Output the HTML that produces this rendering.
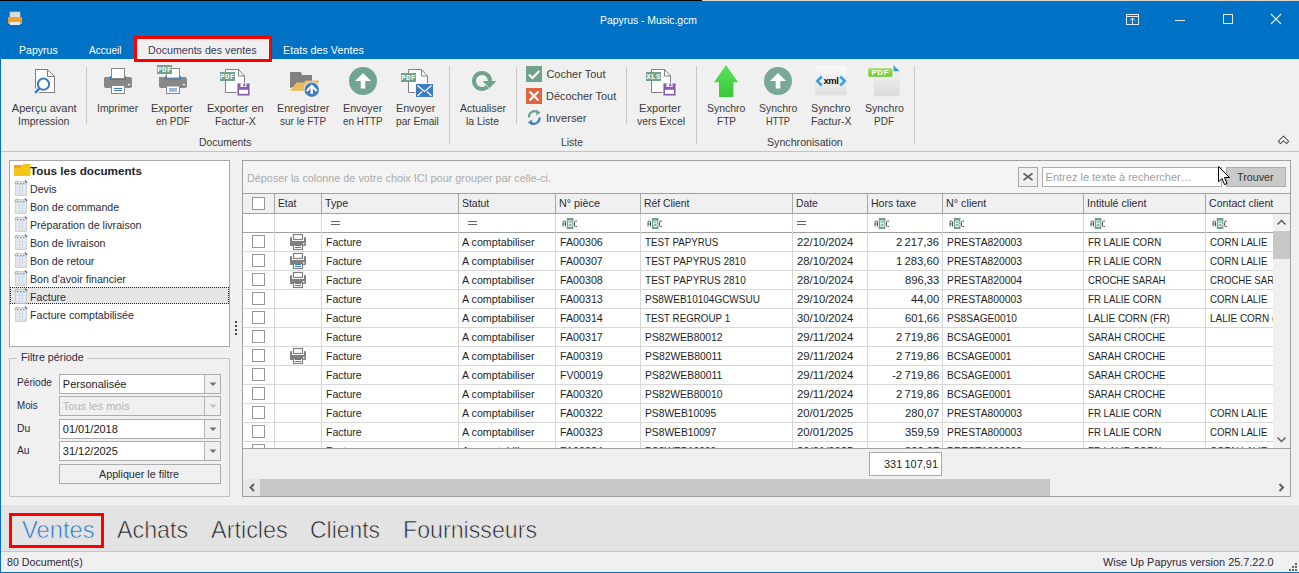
<!DOCTYPE html>
<html><head><meta charset="utf-8"><style>
html,body{margin:0;padding:0;width:1299px;height:573px;overflow:hidden;background:#f0f0f0}
body{position:relative;font-family:"Liberation Sans",sans-serif}
svg{overflow:visible}
</style></head><body>
<div style="position:absolute;left:0px;top:0px;width:1299px;height:573px;background:#f0f0f0"></div>
<div style="position:absolute;left:0px;top:0px;width:1299px;height:59px;background:#0072c6"></div>
<div style="position:absolute;left:0px;top:0px;width:702px;height:1px;background:#000"></div>
<div style="position:absolute;left:702px;top:0px;width:597px;height:1px;background:#d9d5cf"></div>
<div style="position:absolute;left:0px;top:1px;width:1px;height:572px;background:#0072c6"></div>
<div style="position:absolute;left:0px;top:572px;width:1299px;height:1px;background:#0072c6"></div>
<svg style="position:absolute;left:7px;top:11px" width="16" height="16" viewBox="0 0 16 16"><rect x="3" y="1" width="10" height="6" fill="#dcdcdc" stroke="#c8c8c8" stroke-width="0.6"/><rect x="1" y="6" width="14" height="7" rx="1" fill="#f0a030"/><rect x="3" y="11" width="10" height="3" fill="#e8e8e8"/></svg>
<div style="position:absolute;left:600.00px;top:14px;font-size:11px;line-height:normal;white-space:pre;color:#ffffff;transform:scaleX(0.9446);transform-origin:0 0;">Papyrus - Music.gcm</div>
<svg style="position:absolute;left:1125px;top:13px" width="15" height="13" viewBox="0 0 15 13"><rect x="1.5" y="1.5" width="12" height="10" fill="none" stroke="#e8e8e8" stroke-width="1"/><line x1="1.5" y1="3.5" x2="13.5" y2="3.5" stroke="#e8e8e8"/><line x1="7.5" y1="5" x2="7.5" y2="11.5" stroke="#e8e8e8"/><path d="M5 7.5 L7.5 5 L10 7.5" fill="none" stroke="#e8e8e8"/></svg>
<div style="position:absolute;left:1175px;top:20px;width:10px;height:1px;background:#e8e8e8"></div>
<svg style="position:absolute;left:1222px;top:13px" width="12" height="12" viewBox="0 0 12 12"><rect x="1.5" y="1.5" width="9" height="9" fill="none" stroke="#e8e8e8"/></svg>
<svg style="position:absolute;left:1270px;top:13px" width="12" height="12" viewBox="0 0 12 12"><path d="M1 1 L11 11 M11 1 L1 11" stroke="#e8e8e8" stroke-width="1.1"/></svg>
<div style="position:absolute;left:18.60px;top:44px;font-size:11px;line-height:normal;white-space:pre;color:#ffffff;transform:scaleX(0.9590);transform-origin:0 0;">Papyrus</div>
<div style="position:absolute;left:89.00px;top:44px;font-size:11px;line-height:normal;white-space:pre;color:#ffffff;transform:scaleX(0.9165);transform-origin:0 0;">Accueil</div>
<div style="position:absolute;left:137px;top:39px;width:132px;height:20px;background:#f0f0f0"></div>
<div style="position:absolute;left:147.50px;top:44px;font-size:11px;line-height:normal;white-space:pre;color:#3a3a5a;transform:scaleX(0.9697);transform-origin:0 0;">Documents des ventes</div>
<div style="position:absolute;left:282.60px;top:44px;font-size:11px;line-height:normal;white-space:pre;color:#ffffff;transform:scaleX(0.9787);transform-origin:0 0;">Etats des Ventes</div>
<div style="position:absolute;left:1px;top:59px;width:1298px;height:92px;background:#f0f0f0"></div>
<div style="position:absolute;left:1px;top:151px;width:1298px;height:1px;background:#c4c4c4"></div>
<div style="position:absolute;left:11.80px;top:102px;font-size:11px;line-height:normal;white-space:pre;color:#3b3b3b;">Aperçu avant</div>
<div style="position:absolute;left:17.60px;top:115px;font-size:11px;line-height:normal;white-space:pre;color:#3b3b3b;transform:scaleX(0.9554);transform-origin:0 0;">Impression</div>
<div style="position:absolute;left:96.60px;top:102px;font-size:11px;line-height:normal;white-space:pre;color:#3b3b3b;transform:scaleX(0.9472);transform-origin:0 0;">Imprimer</div>
<div style="position:absolute;left:151.30px;top:102px;font-size:11px;line-height:normal;white-space:pre;color:#3b3b3b;transform:scaleX(1.0030);transform-origin:0 0;">Exporter</div>
<div style="position:absolute;left:155.70px;top:115px;font-size:11px;line-height:normal;white-space:pre;color:#3b3b3b;transform:scaleX(0.9063);transform-origin:0 0;">en PDF</div>
<div style="position:absolute;left:206.70px;top:102px;font-size:11px;line-height:normal;white-space:pre;color:#3b3b3b;transform:scaleX(0.9953);transform-origin:0 0;">Exporter en</div>
<div style="position:absolute;left:214.60px;top:115px;font-size:11px;line-height:normal;white-space:pre;color:#3b3b3b;transform:scaleX(0.9674);transform-origin:0 0;">Factur-X</div>
<div style="position:absolute;left:276.60px;top:102px;font-size:11px;line-height:normal;white-space:pre;color:#3b3b3b;transform:scaleX(0.9721);transform-origin:0 0;">Enregistrer</div>
<div style="position:absolute;left:279.70px;top:115px;font-size:11px;line-height:normal;white-space:pre;color:#3b3b3b;transform:scaleX(0.9087);transform-origin:0 0;">sur le FTP</div>
<div style="position:absolute;left:342.60px;top:102px;font-size:11px;line-height:normal;white-space:pre;color:#3b3b3b;transform:scaleX(0.9714);transform-origin:0 0;">Envoyer</div>
<div style="position:absolute;left:342.60px;top:115px;font-size:11px;line-height:normal;white-space:pre;color:#3b3b3b;transform:scaleX(0.9020);transform-origin:0 0;">en HTTP</div>
<div style="position:absolute;left:396.40px;top:102px;font-size:11px;line-height:normal;white-space:pre;color:#3b3b3b;transform:scaleX(0.9739);transform-origin:0 0;">Envoyer</div>
<div style="position:absolute;left:395.60px;top:115px;font-size:11px;line-height:normal;white-space:pre;color:#3b3b3b;transform:scaleX(0.9212);transform-origin:0 0;">par Email</div>
<div style="position:absolute;left:460.00px;top:102px;font-size:11px;line-height:normal;white-space:pre;color:#3b3b3b;transform:scaleX(0.9524);transform-origin:0 0;">Actualiser</div>
<div style="position:absolute;left:466.00px;top:115px;font-size:11px;line-height:normal;white-space:pre;color:#3b3b3b;transform:scaleX(0.9468);transform-origin:0 0;">la Liste</div>
<div style="position:absolute;left:546.40px;top:68px;font-size:11px;line-height:normal;white-space:pre;color:#3b3b3b;">Cocher Tout</div>
<div style="position:absolute;left:546.40px;top:90px;font-size:11px;line-height:normal;white-space:pre;color:#3b3b3b;transform:scaleX(0.9925);transform-origin:0 0;">Décocher Tout</div>
<div style="position:absolute;left:546.40px;top:112px;font-size:11px;line-height:normal;white-space:pre;color:#3b3b3b;transform:scaleX(1.0217);transform-origin:0 0;">Inverser</div>
<div style="position:absolute;left:639.00px;top:102px;font-size:11px;line-height:normal;white-space:pre;color:#3b3b3b;transform:scaleX(1.0102);transform-origin:0 0;">Exporter</div>
<div style="position:absolute;left:637.00px;top:115px;font-size:11px;line-height:normal;white-space:pre;color:#3b3b3b;transform:scaleX(0.9461);transform-origin:0 0;">vers Excel</div>
<div style="position:absolute;left:706.60px;top:102px;font-size:11px;line-height:normal;white-space:pre;color:#3b3b3b;transform:scaleX(0.9516);transform-origin:0 0;">Synchro</div>
<div style="position:absolute;left:717.00px;top:115px;font-size:11px;line-height:normal;white-space:pre;color:#3b3b3b;transform:scaleX(0.9145);transform-origin:0 0;">FTP</div>
<div style="position:absolute;left:758.80px;top:102px;font-size:11px;line-height:normal;white-space:pre;color:#3b3b3b;transform:scaleX(0.9516);transform-origin:0 0;">Synchro</div>
<div style="position:absolute;left:766.00px;top:115px;font-size:11px;line-height:normal;white-space:pre;color:#3b3b3b;transform:scaleX(0.8356);transform-origin:0 0;">HTTP</div>
<div style="position:absolute;left:811.00px;top:102px;font-size:11px;line-height:normal;white-space:pre;color:#3b3b3b;transform:scaleX(0.9763);transform-origin:0 0;">Synchro</div>
<div style="position:absolute;left:810.50px;top:115px;font-size:11px;line-height:normal;white-space:pre;color:#3b3b3b;transform:scaleX(0.9603);transform-origin:0 0;">Factur-X</div>
<div style="position:absolute;left:864.70px;top:102px;font-size:11px;line-height:normal;white-space:pre;color:#3b3b3b;transform:scaleX(0.9615);transform-origin:0 0;">Synchro</div>
<div style="position:absolute;left:874.00px;top:115px;font-size:11px;line-height:normal;white-space:pre;color:#3b3b3b;transform:scaleX(0.9091);transform-origin:0 0;">PDF</div>
<div style="position:absolute;left:198.90px;top:136px;font-size:11px;line-height:normal;white-space:pre;color:#3b3b3b;transform:scaleX(0.9401);transform-origin:0 0;">Documents</div>
<div style="position:absolute;left:561.00px;top:136px;font-size:11px;line-height:normal;white-space:pre;color:#3b3b3b;transform:scaleX(0.9468);transform-origin:0 0;">Liste</div>
<div style="position:absolute;left:766.70px;top:136px;font-size:11px;line-height:normal;white-space:pre;color:#3b3b3b;transform:scaleX(0.9684);transform-origin:0 0;">Synchronisation</div>
<div style="position:absolute;left:86px;top:67px;width:1px;height:57px;background:#c9c9c9"></div>
<div style="position:absolute;left:449px;top:66px;width:1px;height:78px;background:#c9c9c9"></div>
<div style="position:absolute;left:516px;top:67px;width:1px;height:57px;background:#c9c9c9"></div>
<div style="position:absolute;left:626px;top:67px;width:1px;height:57px;background:#c9c9c9"></div>
<div style="position:absolute;left:696px;top:66px;width:1px;height:78px;background:#c9c9c9"></div>
<div style="position:absolute;left:914px;top:66px;width:1px;height:78px;background:#c9c9c9"></div>
<svg style="position:absolute;left:1268px;top:126px" width="28" height="24" viewBox="0 0 28 24"><path d="M10.3 15.4 L15.5 10.2 L20.7 15.4 L18.5 17.6 L15.5 14.6 L12.5 17.6 Z" fill="#fff" stroke="#555" stroke-width="1.1" stroke-linejoin="round"/></svg>
<svg style="position:absolute;left:30px;top:64px" width="32" height="34" viewBox="0 0 32 34"><path d="M5.5 24 L5.5 5.5 L17.5 5.5 L24.5 12.5 L24.5 28.5 L9 28.5" fill="#fff" stroke="#808080"/><path d="M5.5 5.5 L17.5 5.5 L24.5 12.5 L24.5 28.5 L5.5 28.5 Z" fill="#fff" stroke="none"/><path d="M5.5 24.5 L5.5 5.5 L17.5 5.5 L24.5 12.5 L24.5 28.5 L9.5 28.5" fill="none" stroke="#808080"/><path d="M17.5 5.5 L17.5 12.5 L24.5 12.5" fill="none" stroke="#808080"/><circle cx="13.5" cy="20.2" r="5.6" fill="#fff" stroke="#3d7bbf" stroke-width="2"/><path d="M9.6 24.2 L5.2 28.8" stroke="#3d7bbf" stroke-width="2.6"/></svg>
<svg style="position:absolute;left:100px;top:64px" width="36" height="34" viewBox="0 0 36 34"><path d="M5 13 Q4 13 4 15 L4 22 Q4 24 6 24 L30 24 Q32 24 32 22 L32 15 Q32 13 30 13 Z" fill="#888"/><rect x="10" y="12" width="16" height="4" fill="#3d7bbf"/><rect x="11.5" y="4.5" width="13" height="10" fill="#fff" stroke="#888"/><rect x="28" y="20" width="2" height="1.2" fill="#fff"/><rect x="11.5" y="21.5" width="13" height="8" fill="#fff" stroke="#888"/><rect x="14" y="24" width="8" height="1" fill="#3d7bbf"/><rect x="14" y="26" width="8" height="1" fill="#3d7bbf"/></svg>
<svg style="position:absolute;left:154px;top:62px" width="36" height="36" viewBox="0 0 36 36"><path d="M5 15 Q5 15 5 17 L5 24 Q5 26 7 26 L31 26 Q33 26 33 24 L33 17 Q33 15 31 15 Z" fill="#888"/><rect x="11" y="14" width="16" height="3.6" fill="#3d7bbf"/><rect x="12.5" y="6.5" width="13" height="9.5" fill="#fff" stroke="#888"/><rect x="29" y="22" width="2" height="1.2" fill="#fff"/><rect x="12.5" y="24" width="13" height="7.5" fill="#fff" stroke="#888"/><rect x="15" y="26.4" width="8" height="1" fill="#3d7bbf"/><rect x="15" y="28.4" width="8" height="1" fill="#3d7bbf"/><rect x="3" y="3" width="15" height="9" fill="#6fa38b"/><text x="10.5" y="10.2" font-family="Liberation Mono" font-weight="bold" font-size="7.5" fill="#fff" text-anchor="middle" letter-spacing="0.3">PDF</text></svg>
<svg style="position:absolute;left:216px;top:64px" width="36" height="34" viewBox="0 0 36 34"><path d="M9.5 28.5 L9.5 5.5 L22.5 5.5 L28.5 12 L28.5 28.5 Z" fill="#fff" stroke="#808080"/><path d="M22.5 5.5 L22.5 12 L28.5 12" fill="none" stroke="#808080"/><rect x="4" y="8" width="15" height="9" fill="#6fa38b"/><text x="11.5" y="15.2" font-family="Liberation Mono" font-weight="bold" font-size="7.5" fill="#fff" text-anchor="middle" letter-spacing="0.3">PDF</text><rect x="21" y="19" width="13" height="13" rx="0.5" fill="#8c5cb0" stroke="#fff" stroke-width="0.8"/><rect x="24.5" y="19.4" width="6" height="3.6" fill="#fff"/><rect x="27.3" y="19.8" width="2" height="2.6" fill="#8c5cb0"/><rect x="23" y="25.8" width="9" height="4" fill="#fff"/></svg>
<svg style="position:absolute;left:286px;top:64px" width="36" height="36" viewBox="0 0 36 36"><path d="M4 24 L4 9 Q4 8 5 8 L15 8 L16 11 L25 11 Q26 11 26 12 L26 17 L4 24 Z" fill="#808080"/><path d="M4 26.7 L10.5 18.5 L18 18.5 L19.5 16.6 L33 16.6 L30 26.7 Z" fill="#e8bb5e"/><circle cx="25.75" cy="25.75" r="8" fill="#f0f0f0"/><circle cx="25.75" cy="25.75" r="7.2" fill="#3f7cc0"/><path d="M20.8 27 L25.75 21.8 L30.7 27" fill="none" stroke="#fff" stroke-width="2"/><rect x="24.6" y="23" width="2.3" height="7" fill="#fff"/></svg>
<svg style="position:absolute;left:348px;top:66px" width="30" height="30" viewBox="0 0 30 30"><circle cx="15" cy="15" r="14" fill="#72a591"/><path d="M7 15 L15 7 L23 15 Z" fill="#fff"/><rect x="12.75" y="14" width="4.5" height="8.5" fill="#fff"/></svg>
<svg style="position:absolute;left:396px;top:64px" width="40" height="36" viewBox="0 0 40 36"><path d="M12.5 28.5 L12.5 5.5 L25.5 5.5 L31.5 12 L31.5 28.5 Z" fill="#fff" stroke="#808080"/><path d="M25.5 5.5 L25.5 12 L31.5 12" fill="none" stroke="#808080"/><rect x="5" y="9" width="15" height="9" fill="#6fa38b"/><text x="12.5" y="16.2" font-family="Liberation Mono" font-weight="bold" font-size="7.5" fill="#fff" text-anchor="middle" letter-spacing="0.3">PDF</text><rect x="19.5" y="19.5" width="18" height="14" fill="#3f7cc0" stroke="#fff" stroke-width="0.8"/><path d="M21.5 21.5 L28.5 27.5 L35.5 21.5 M21.5 32 L26 27.5 M35.5 32 L31 27.5" fill="none" stroke="#fff" stroke-width="1.1"/></svg>
<svg style="position:absolute;left:466px;top:64px" width="36" height="36" viewBox="0 0 36 36"><path d="M24 17 A8 8 0 1 0 21.5 22.8" fill="none" stroke="#6fa38b" stroke-width="4"/><path d="M16.6 17 L30.5 17 L23.4 24.2 Z" fill="#6fa38b"/></svg>
<svg style="position:absolute;left:526px;top:66px" width="16" height="16" viewBox="0 0 16 16"><rect width="16" height="16" fill="#6fa38b"/><path d="M2.8 8.5 L6.5 12 L13.3 5" fill="none" stroke="#fff" stroke-width="2.2"/></svg>
<svg style="position:absolute;left:526px;top:88px" width="16" height="16" viewBox="0 0 16 16"><rect width="16" height="16" fill="#e0643f"/><path d="M3.5 3.5 L12.5 12.5 M12.5 3.5 L3.5 12.5" fill="none" stroke="#fff" stroke-width="2.2"/></svg>
<svg style="position:absolute;left:526px;top:108px" width="16" height="18" viewBox="0 0 16 18"><path d="M3 9.5 A5.5 5.5 0 0 1 11.5 4.2" fill="none" stroke="#6fa38b" stroke-width="2.2"/><path d="M10 1.5 L14.5 4.5 L10.5 7.5 Z" fill="#6fa38b"/><path d="M13.5 9.5 A5.5 5.5 0 0 1 5 14.8" fill="none" stroke="#3f7cc0" stroke-width="2.2"/><path d="M6.5 17.5 L2 14.5 L6 11.5 Z" fill="#3f7cc0"/></svg>
<svg style="position:absolute;left:642px;top:64px" width="38" height="36" viewBox="0 0 38 36"><path d="M9.5 28.5 L9.5 5.5 L22.5 5.5 L28.5 12 L28.5 28.5 Z" fill="#fff" stroke="#808080"/><path d="M22.5 5.5 L22.5 12 L28.5 12" fill="none" stroke="#808080"/><rect x="4" y="8" width="15" height="9" fill="#6fa38b"/><text x="11.5" y="15.2" font-family="Liberation Mono" font-weight="bold" font-size="7.5" fill="#fff" text-anchor="middle" letter-spacing="0.3">XLS</text><rect x="21" y="19" width="13" height="13" rx="0.5" fill="#8c5cb0" stroke="#fff" stroke-width="0.8"/><rect x="24.5" y="19.4" width="6" height="3.6" fill="#fff"/><rect x="27.3" y="19.8" width="2" height="2.6" fill="#8c5cb0"/><rect x="23" y="25.8" width="9" height="4" fill="#fff"/></svg>
<svg style="position:absolute;left:708px;top:62px" width="36" height="38" viewBox="0 0 36 38"><defs><linearGradient id="gar" x1="0" y1="0" x2="0" y2="1"><stop offset="0" stop-color="#5ee05e"/><stop offset="1" stop-color="#38c838"/></linearGradient></defs><path d="M18 3 L6 20.2 L11 20.2 L11 34 Q11 35 12 35 L24.4 35 Q25.4 35 25.4 34 L25.4 20.2 L30 20.2 Z" fill="url(#gar)"/></svg>
<svg style="position:absolute;left:763px;top:66px" width="30" height="30" viewBox="0 0 30 30"><circle cx="15" cy="15" r="14" fill="#78a898"/><path d="M7 15 L15 7 L23 15 Z" fill="#fff"/><rect x="12.75" y="14" width="4.5" height="8.5" fill="#fff"/></svg>
<svg style="position:absolute;left:810px;top:62px" width="40" height="38" viewBox="0 0 40 38"><defs><linearGradient id="gx" x1="0" y1="0" x2="0" y2="1"><stop offset="0" stop-color="#fafafa"/><stop offset="1" stop-color="#dedede"/></linearGradient><linearGradient id="gp" x1="0" y1="0" x2="0" y2="1"><stop offset="0" stop-color="#f4f4f4"/><stop offset="1" stop-color="#dcdcdc"/></linearGradient><linearGradient id="gg" x1="0" y1="0" x2="0" y2="1"><stop offset="0" stop-color="#9ee05a"/><stop offset="1" stop-color="#6cc82a"/></linearGradient></defs><rect x="5.2" y="4" width="31.3" height="29.6" rx="2.5" fill="url(#gx)"/><path d="M11.8 14.5 L7.3 19 L11.8 23.5" fill="none" stroke="#3aa0e0" stroke-width="2.6"/><path d="M30.2 14.5 L34.7 19 L30.2 23.5" fill="none" stroke="#3aa0e0" stroke-width="2.6"/><text x="21" y="21.8" font-family="Liberation Sans" font-weight="bold" font-size="9.5" fill="#111" text-anchor="middle" letter-spacing="-0.4">xml</text></svg>
<svg style="position:absolute;left:864px;top:62px" width="40" height="38" viewBox="0 0 40 38"><path d="M10 3.3 L29.3 3.3 L35.7 9.3 L35.7 34.3 L10 34.3 Z" fill="url(#gp)"/><path d="M29.3 3.3 L35.7 9.3 L29.8 9.3 Z" fill="#3a98d0"/><rect x="4.2" y="6.2" width="24.3" height="8.6" rx="1.5" fill="url(#gg)"/><text x="16.3" y="13.3" font-family="Liberation Sans" font-weight="bold" font-size="8" fill="#fff" text-anchor="middle" letter-spacing="0.6">PDF</text></svg>
<div style="position:absolute;left:9px;top:160px;width:221px;height:187px;background:#fff;border:1px solid #a8a8a8;box-sizing:border-box"></div>
<div style="position:absolute;left:10px;top:287px;width:219px;height:17px;background:#e6e6e6;border:1px dotted #222;box-sizing:border-box"></div>
<svg style="position:absolute;left:14px;top:164px" width="17" height="13" viewBox="0 0 17 13"><path d="M0 2 Q0 1 1 1 L7 1 L8 2 L8 5 L0 5 Z" fill="#f0a020"/><path d="M0 4 L6 4 L9 0.5 Q9.5 0 10.5 0 L15.5 0 Q16.5 0 16.5 1 L16.5 11 Q16.5 12 15.5 12 L1 12 Q0 12 0 11 Z" fill="#f5c518"/></svg>
<div style="position:absolute;left:30.40px;top:165px;font-size:11px;line-height:normal;white-space:pre;color:#1e1e2e;transform:scaleX(1.0612);transform-origin:0 0;font-weight:bold;">Tous les documents</div>
<svg style="position:absolute;left:14px;top:180px" width="14" height="16" viewBox="0 0 14 16"><rect x="1.3" y="1.5" width="11.2" height="14" fill="#dde3ea" stroke="#c0c4c8" stroke-width="0.7"/><path d="M2.5 6 H11.5 M2.5 9 H11.5 M2.5 12 H11.5" stroke="#f4f6f8" stroke-width="1"/><path d="M5.5 5 V14 M8.5 5 V14" stroke="#b6c8dc" stroke-width="0.6"/><path d="M3 3.6 H4.5 M6 3.6 H7.5 M9 3.6 H10.5" stroke="#5a9ad8" stroke-width="1.3"/><path d="M0.5 4 L3.5 0.5" stroke="#e0a050" stroke-width="1"/><path d="M11 0.5 L13 3" stroke="#555" stroke-width="1.2"/></svg>
<div style="position:absolute;left:29.60px;top:183px;font-size:11px;line-height:normal;white-space:pre;color:#2a2a3a;transform:scaleX(0.9650);transform-origin:0 0;">Devis</div>
<svg style="position:absolute;left:14px;top:198px" width="14" height="16" viewBox="0 0 14 16"><rect x="1.3" y="1.5" width="11.2" height="14" fill="#dde3ea" stroke="#c0c4c8" stroke-width="0.7"/><path d="M2.5 6 H11.5 M2.5 9 H11.5 M2.5 12 H11.5" stroke="#f4f6f8" stroke-width="1"/><path d="M5.5 5 V14 M8.5 5 V14" stroke="#b6c8dc" stroke-width="0.6"/><path d="M3 3.6 H4.5 M6 3.6 H7.5 M9 3.6 H10.5" stroke="#5a9ad8" stroke-width="1.3"/><path d="M0.5 4 L3.5 0.5" stroke="#e0a050" stroke-width="1"/><path d="M11 0.5 L13 3" stroke="#555" stroke-width="1.2"/></svg>
<div style="position:absolute;left:29.60px;top:201px;font-size:11px;line-height:normal;white-space:pre;color:#2a2a3a;transform:scaleX(0.9650);transform-origin:0 0;">Bon de commande</div>
<svg style="position:absolute;left:14px;top:216px" width="14" height="16" viewBox="0 0 14 16"><rect x="1.3" y="1.5" width="11.2" height="14" fill="#dde3ea" stroke="#c0c4c8" stroke-width="0.7"/><path d="M2.5 6 H11.5 M2.5 9 H11.5 M2.5 12 H11.5" stroke="#f4f6f8" stroke-width="1"/><path d="M5.5 5 V14 M8.5 5 V14" stroke="#b6c8dc" stroke-width="0.6"/><path d="M3 3.6 H4.5 M6 3.6 H7.5 M9 3.6 H10.5" stroke="#5a9ad8" stroke-width="1.3"/><path d="M0.5 4 L3.5 0.5" stroke="#e0a050" stroke-width="1"/><path d="M11 0.5 L13 3" stroke="#555" stroke-width="1.2"/></svg>
<div style="position:absolute;left:29.60px;top:219px;font-size:11px;line-height:normal;white-space:pre;color:#2a2a3a;transform:scaleX(0.9650);transform-origin:0 0;">Préparation de livraison</div>
<svg style="position:absolute;left:14px;top:234px" width="14" height="16" viewBox="0 0 14 16"><rect x="1.3" y="1.5" width="11.2" height="14" fill="#dde3ea" stroke="#c0c4c8" stroke-width="0.7"/><path d="M2.5 6 H11.5 M2.5 9 H11.5 M2.5 12 H11.5" stroke="#f4f6f8" stroke-width="1"/><path d="M5.5 5 V14 M8.5 5 V14" stroke="#b6c8dc" stroke-width="0.6"/><path d="M3 3.6 H4.5 M6 3.6 H7.5 M9 3.6 H10.5" stroke="#5a9ad8" stroke-width="1.3"/><path d="M0.5 4 L3.5 0.5" stroke="#e0a050" stroke-width="1"/><path d="M11 0.5 L13 3" stroke="#555" stroke-width="1.2"/></svg>
<div style="position:absolute;left:29.60px;top:237px;font-size:11px;line-height:normal;white-space:pre;color:#2a2a3a;transform:scaleX(0.9650);transform-origin:0 0;">Bon de livraison</div>
<svg style="position:absolute;left:14px;top:252px" width="14" height="16" viewBox="0 0 14 16"><rect x="1.3" y="1.5" width="11.2" height="14" fill="#dde3ea" stroke="#c0c4c8" stroke-width="0.7"/><path d="M2.5 6 H11.5 M2.5 9 H11.5 M2.5 12 H11.5" stroke="#f4f6f8" stroke-width="1"/><path d="M5.5 5 V14 M8.5 5 V14" stroke="#b6c8dc" stroke-width="0.6"/><path d="M3 3.6 H4.5 M6 3.6 H7.5 M9 3.6 H10.5" stroke="#5a9ad8" stroke-width="1.3"/><path d="M0.5 4 L3.5 0.5" stroke="#e0a050" stroke-width="1"/><path d="M11 0.5 L13 3" stroke="#555" stroke-width="1.2"/></svg>
<div style="position:absolute;left:29.60px;top:255px;font-size:11px;line-height:normal;white-space:pre;color:#2a2a3a;transform:scaleX(0.9650);transform-origin:0 0;">Bon de retour</div>
<svg style="position:absolute;left:14px;top:270px" width="14" height="16" viewBox="0 0 14 16"><rect x="1.3" y="1.5" width="11.2" height="14" fill="#dde3ea" stroke="#c0c4c8" stroke-width="0.7"/><path d="M2.5 6 H11.5 M2.5 9 H11.5 M2.5 12 H11.5" stroke="#f4f6f8" stroke-width="1"/><path d="M5.5 5 V14 M8.5 5 V14" stroke="#b6c8dc" stroke-width="0.6"/><path d="M3 3.6 H4.5 M6 3.6 H7.5 M9 3.6 H10.5" stroke="#5a9ad8" stroke-width="1.3"/><path d="M0.5 4 L3.5 0.5" stroke="#e0a050" stroke-width="1"/><path d="M11 0.5 L13 3" stroke="#555" stroke-width="1.2"/></svg>
<div style="position:absolute;left:29.60px;top:273px;font-size:11px;line-height:normal;white-space:pre;color:#2a2a3a;transform:scaleX(0.9650);transform-origin:0 0;">Bon d&#x27;avoir financier</div>
<svg style="position:absolute;left:14px;top:288px" width="14" height="16" viewBox="0 0 14 16"><rect x="1.3" y="1.5" width="11.2" height="14" fill="#dde3ea" stroke="#c0c4c8" stroke-width="0.7"/><path d="M2.5 6 H11.5 M2.5 9 H11.5 M2.5 12 H11.5" stroke="#f4f6f8" stroke-width="1"/><path d="M5.5 5 V14 M8.5 5 V14" stroke="#b6c8dc" stroke-width="0.6"/><path d="M3 3.6 H4.5 M6 3.6 H7.5 M9 3.6 H10.5" stroke="#5a9ad8" stroke-width="1.3"/><path d="M0.5 4 L3.5 0.5" stroke="#e0a050" stroke-width="1"/><path d="M11 0.5 L13 3" stroke="#555" stroke-width="1.2"/></svg>
<div style="position:absolute;left:29.60px;top:291px;font-size:11px;line-height:normal;white-space:pre;color:#2a2a3a;transform:scaleX(0.9650);transform-origin:0 0;">Facture</div>
<svg style="position:absolute;left:14px;top:306px" width="14" height="16" viewBox="0 0 14 16"><rect x="1.3" y="1.5" width="11.2" height="14" fill="#dde3ea" stroke="#c0c4c8" stroke-width="0.7"/><path d="M2.5 6 H11.5 M2.5 9 H11.5 M2.5 12 H11.5" stroke="#f4f6f8" stroke-width="1"/><path d="M5.5 5 V14 M8.5 5 V14" stroke="#b6c8dc" stroke-width="0.6"/><path d="M3 3.6 H4.5 M6 3.6 H7.5 M9 3.6 H10.5" stroke="#5a9ad8" stroke-width="1.3"/><path d="M0.5 4 L3.5 0.5" stroke="#e0a050" stroke-width="1"/><path d="M11 0.5 L13 3" stroke="#555" stroke-width="1.2"/></svg>
<div style="position:absolute;left:29.60px;top:309px;font-size:11px;line-height:normal;white-space:pre;color:#2a2a3a;transform:scaleX(0.9650);transform-origin:0 0;">Facture comptabilisée</div>
<div style="position:absolute;left:235px;top:321px;width:2px;height:2px;background:#444"></div>
<div style="position:absolute;left:235px;top:325px;width:2px;height:2px;background:#444"></div>
<div style="position:absolute;left:235px;top:329px;width:2px;height:2px;background:#444"></div>
<div style="position:absolute;left:235px;top:333px;width:2px;height:2px;background:#444"></div>
<div style="position:absolute;left:9px;top:358px;width:221px;height:139px;border:1px solid #c4c4c4;box-sizing:border-box"></div>
<div style="position:absolute;left:17px;top:350px;width:70px;height:14px;background:#f0f0f0"></div>
<div style="position:absolute;left:20.70px;top:351px;font-size:11px;line-height:normal;white-space:pre;color:#2a2a3a;transform:scaleX(0.9767);transform-origin:0 0;">Filtre période</div>
<div style="position:absolute;left:16.80px;top:376px;font-size:11px;line-height:normal;white-space:pre;color:#2a2a3a;transform:scaleX(0.9231);transform-origin:0 0;">Période</div>
<div style="position:absolute;left:16.80px;top:399px;font-size:11px;line-height:normal;white-space:pre;color:#2a2a3a;transform:scaleX(0.8870);transform-origin:0 0;">Mois</div>
<div style="position:absolute;left:16.80px;top:422px;font-size:11px;line-height:normal;white-space:pre;color:#2a2a3a;transform:scaleX(0.9387);transform-origin:0 0;">Du</div>
<div style="position:absolute;left:16.80px;top:444px;font-size:11px;line-height:normal;white-space:pre;color:#2a2a3a;transform:scaleX(0.9364);transform-origin:0 0;">Au</div>
<div style="position:absolute;left:59px;top:374px;width:162px;height:20px;background:#fff;border:1px solid #adadad;box-sizing:border-box"></div>
<div style="position:absolute;left:204px;top:375px;width:16px;height:18px;background:#f0f0f0"></div>
<div style="position:absolute;left:204px;top:375px;width:1px;height:18px;background:#b4b4b4"></div>
<svg style="position:absolute;left:207px;top:379px" width="12" height="10" viewBox="0 0 12 10"><path d="M2.5 3.5 L9.5 3.5 L6 7 Z" fill="#707070"/></svg>
<div style="position:absolute;left:62.80px;top:378px;font-size:11px;line-height:normal;white-space:pre;color:#1a1a1a;">Personalisée</div>
<div style="position:absolute;left:59px;top:396px;width:162px;height:20px;background:#f0f0f0;border:1px solid #adadad;box-sizing:border-box"></div>
<div style="position:absolute;left:204px;top:397px;width:16px;height:18px;background:#f0f0f0"></div>
<div style="position:absolute;left:204px;top:397px;width:1px;height:18px;background:#b4b4b4"></div>
<svg style="position:absolute;left:207px;top:401px" width="12" height="10" viewBox="0 0 12 10"><path d="M2.5 3.5 L9.5 3.5 L6 7 Z" fill="#c0c0c0"/></svg>
<div style="position:absolute;left:62.80px;top:400px;font-size:11px;line-height:normal;white-space:pre;color:#b4b4b4;">Tous les mois</div>
<div style="position:absolute;left:59px;top:419px;width:162px;height:20px;background:#fff;border:1px solid #adadad;box-sizing:border-box"></div>
<div style="position:absolute;left:204px;top:420px;width:16px;height:18px;background:#f0f0f0"></div>
<div style="position:absolute;left:204px;top:420px;width:1px;height:18px;background:#b4b4b4"></div>
<svg style="position:absolute;left:207px;top:424px" width="12" height="10" viewBox="0 0 12 10"><path d="M2.5 3.5 L9.5 3.5 L6 7 Z" fill="#707070"/></svg>
<div style="position:absolute;left:62.80px;top:423px;font-size:11px;line-height:normal;white-space:pre;color:#1a1a1a;">01/01/2018</div>
<div style="position:absolute;left:59px;top:441px;width:162px;height:20px;background:#fff;border:1px solid #adadad;box-sizing:border-box"></div>
<div style="position:absolute;left:204px;top:442px;width:16px;height:18px;background:#f0f0f0"></div>
<div style="position:absolute;left:204px;top:442px;width:1px;height:18px;background:#b4b4b4"></div>
<svg style="position:absolute;left:207px;top:446px" width="12" height="10" viewBox="0 0 12 10"><path d="M2.5 3.5 L9.5 3.5 L6 7 Z" fill="#707070"/></svg>
<div style="position:absolute;left:62.80px;top:445px;font-size:11px;line-height:normal;white-space:pre;color:#1a1a1a;">31/12/2025</div>
<div style="position:absolute;left:59px;top:464px;width:162px;height:20px;background:#f0f0f0;border:1px solid #adadad;box-sizing:border-box"></div>
<div style="position:absolute;left:99.00px;top:468px;font-size:11px;line-height:normal;white-space:pre;color:#2a2a3a;transform:scaleX(0.9764);transform-origin:0 0;">Appliquer le filtre</div>
<div style="position:absolute;left:242px;top:160px;width:1049px;height:337px;background:#fff;border:1px solid #a0a0a0;box-sizing:border-box"></div>
<div style="position:absolute;left:243px;top:161px;width:1047px;height:32px;background:#f4f4f4"></div>
<div style="position:absolute;left:247.30px;top:172px;font-size:11px;line-height:normal;white-space:pre;color:#ababab;transform:scaleX(0.9845);transform-origin:0 0;">Déposer la colonne de votre choix ICI pour grouper par celle-ci.</div>
<div style="position:absolute;left:1018px;top:167px;width:20px;height:20px;background:#f0f0f0;border:1px solid #a8a8a8;box-sizing:border-box"></div>
<svg style="position:absolute;left:1018px;top:167px" width="20" height="20" viewBox="0 0 20 20"><path d="M5.5 6.3 L14.5 13.2 M14.5 6.3 L5.5 13.2" stroke="#555" stroke-width="1.6"/></svg>
<div style="position:absolute;left:1042px;top:167px;width:180px;height:20px;background:#fff;border:1px solid #adadad;box-sizing:border-box"></div>
<div style="position:absolute;left:1045.60px;top:171px;font-size:11px;line-height:normal;white-space:pre;color:#a0a0a0;">Entrez le texte à rechercher…</div>
<div style="position:absolute;left:1226px;top:167px;width:60px;height:20px;background:#cacaca;border:1px solid #adadad;box-sizing:border-box"></div>
<div style="position:absolute;left:1237.00px;top:171px;font-size:11px;line-height:normal;white-space:pre;color:#333;transform:scaleX(0.9789);transform-origin:0 0;">Trouver</div>
<div style="position:absolute;left:243px;top:193px;width:1047px;height:1px;background:#a0a0a0"></div>
<div style="position:absolute;left:243px;top:194px;width:1047px;height:19px;background:#f0f0f0"></div>
<div style="position:absolute;left:243px;top:213px;width:1047px;height:1px;background:#a0a0a0"></div>
<div style="position:absolute;left:243px;top:214px;width:1030px;height:18px;background:#fff"></div>
<div style="position:absolute;left:243px;top:232px;width:1030px;height:1px;background:#a0a0a0"></div>
<div style="position:absolute;left:274px;top:194px;width:1px;height:19px;background:#a8a8a8"></div>
<div style="position:absolute;left:274px;top:214px;width:1px;height:234px;background:#d8d8d8"></div>
<div style="position:absolute;left:321px;top:194px;width:1px;height:19px;background:#a8a8a8"></div>
<div style="position:absolute;left:321px;top:214px;width:1px;height:234px;background:#d8d8d8"></div>
<div style="position:absolute;left:458px;top:194px;width:1px;height:19px;background:#a8a8a8"></div>
<div style="position:absolute;left:458px;top:214px;width:1px;height:234px;background:#d8d8d8"></div>
<div style="position:absolute;left:555px;top:194px;width:1px;height:19px;background:#a8a8a8"></div>
<div style="position:absolute;left:555px;top:214px;width:1px;height:234px;background:#d8d8d8"></div>
<div style="position:absolute;left:640px;top:194px;width:1px;height:19px;background:#a8a8a8"></div>
<div style="position:absolute;left:640px;top:214px;width:1px;height:234px;background:#d8d8d8"></div>
<div style="position:absolute;left:792px;top:194px;width:1px;height:19px;background:#a8a8a8"></div>
<div style="position:absolute;left:792px;top:214px;width:1px;height:234px;background:#d8d8d8"></div>
<div style="position:absolute;left:867px;top:194px;width:1px;height:19px;background:#a8a8a8"></div>
<div style="position:absolute;left:867px;top:214px;width:1px;height:234px;background:#d8d8d8"></div>
<div style="position:absolute;left:942px;top:194px;width:1px;height:19px;background:#a8a8a8"></div>
<div style="position:absolute;left:942px;top:214px;width:1px;height:234px;background:#d8d8d8"></div>
<div style="position:absolute;left:1083px;top:194px;width:1px;height:19px;background:#a8a8a8"></div>
<div style="position:absolute;left:1083px;top:214px;width:1px;height:234px;background:#d8d8d8"></div>
<div style="position:absolute;left:1205px;top:194px;width:1px;height:19px;background:#a8a8a8"></div>
<div style="position:absolute;left:1205px;top:214px;width:1px;height:234px;background:#d8d8d8"></div>
<div style="position:absolute;left:278.40px;top:197px;font-size:11px;line-height:normal;white-space:pre;color:#2a2a3a;transform:scaleX(0.9356);transform-origin:0 0;">Etat</div>
<div style="position:absolute;left:325.40px;top:197px;font-size:11px;line-height:normal;white-space:pre;color:#2a2a3a;transform:scaleX(0.9702);transform-origin:0 0;">Type</div>
<div style="position:absolute;left:462.40px;top:197px;font-size:11px;line-height:normal;white-space:pre;color:#2a2a3a;transform:scaleX(0.9482);transform-origin:0 0;">Statut</div>
<div style="position:absolute;left:559.40px;top:197px;font-size:11px;line-height:normal;white-space:pre;color:#2a2a3a;transform:scaleX(0.9806);transform-origin:0 0;">N° pièce</div>
<div style="position:absolute;left:644.40px;top:197px;font-size:11px;line-height:normal;white-space:pre;color:#2a2a3a;transform:scaleX(0.9420);transform-origin:0 0;">Réf Client</div>
<div style="position:absolute;left:796.40px;top:197px;font-size:11px;line-height:normal;white-space:pre;color:#2a2a3a;transform:scaleX(0.9391);transform-origin:0 0;">Date</div>
<div style="position:absolute;left:871.40px;top:197px;font-size:11px;line-height:normal;white-space:pre;color:#2a2a3a;transform:scaleX(0.9589);transform-origin:0 0;">Hors taxe</div>
<div style="position:absolute;left:946.40px;top:197px;font-size:11px;line-height:normal;white-space:pre;color:#2a2a3a;transform:scaleX(0.9806);transform-origin:0 0;">N° client</div>
<div style="position:absolute;left:1087.40px;top:197px;font-size:11px;line-height:normal;white-space:pre;color:#2a2a3a;transform:scaleX(0.9710);transform-origin:0 0;">Intitulé client</div>
<div style="position:absolute;left:1209.40px;top:197px;font-size:11px;line-height:normal;white-space:pre;color:#2a2a3a;transform:scaleX(0.9636);transform-origin:0 0;">Contact client</div>
<div style="position:absolute;left:252px;top:197px;width:13px;height:13px;background:#fff;border:1px solid #969696;box-sizing:border-box"></div>
<div style="position:absolute;left:331px;top:221px;width:9px;height:1px;background:#666"></div>
<div style="position:absolute;left:331px;top:224px;width:9px;height:1px;background:#666"></div>
<div style="position:absolute;left:467.6px;top:221px;width:9px;height:1px;background:#666"></div>
<div style="position:absolute;left:467.6px;top:224px;width:9px;height:1px;background:#666"></div>
<div style="position:absolute;left:796.8px;top:221px;width:9px;height:1px;background:#666"></div>
<div style="position:absolute;left:796.8px;top:224px;width:9px;height:1px;background:#666"></div>
<svg style="position:absolute;left:561.5px;top:218px" width="17" height="12" viewBox="0 0 17 12"><path d="M1 8.5 V4 Q1 3 2.25 3 Q3.5 3 3.5 4 V8.5 M1 6 H3.5" fill="none" stroke="#555" stroke-width="1"/><rect x="4.8" y="0" width="6.6" height="11" fill="#6fa38b"/><path d="M6.8 8.5 V3 H9 Q10 3 10 4.2 Q10 5.6 8.8 5.6 H6.8 M8.8 5.6 Q10.2 5.6 10.2 7 Q10.2 8.5 9 8.5 H6.8" fill="none" stroke="#fff" stroke-width="1"/><path d="M15 3.2 H13.5 Q12.5 3.2 12.5 4.5 V7.2 Q12.5 8.5 13.5 8.5 H15" fill="none" stroke="#555" stroke-width="1"/></svg>
<svg style="position:absolute;left:646.5px;top:218px" width="17" height="12" viewBox="0 0 17 12"><path d="M1 8.5 V4 Q1 3 2.25 3 Q3.5 3 3.5 4 V8.5 M1 6 H3.5" fill="none" stroke="#555" stroke-width="1"/><rect x="4.8" y="0" width="6.6" height="11" fill="#6fa38b"/><path d="M6.8 8.5 V3 H9 Q10 3 10 4.2 Q10 5.6 8.8 5.6 H6.8 M8.8 5.6 Q10.2 5.6 10.2 7 Q10.2 8.5 9 8.5 H6.8" fill="none" stroke="#fff" stroke-width="1"/><path d="M15 3.2 H13.5 Q12.5 3.2 12.5 4.5 V7.2 Q12.5 8.5 13.5 8.5 H15" fill="none" stroke="#555" stroke-width="1"/></svg>
<svg style="position:absolute;left:873.5px;top:218px" width="17" height="12" viewBox="0 0 17 12"><path d="M1 8.5 V4 Q1 3 2.25 3 Q3.5 3 3.5 4 V8.5 M1 6 H3.5" fill="none" stroke="#555" stroke-width="1"/><rect x="4.8" y="0" width="6.6" height="11" fill="#6fa38b"/><path d="M6.8 8.5 V3 H9 Q10 3 10 4.2 Q10 5.6 8.8 5.6 H6.8 M8.8 5.6 Q10.2 5.6 10.2 7 Q10.2 8.5 9 8.5 H6.8" fill="none" stroke="#fff" stroke-width="1"/><path d="M15 3.2 H13.5 Q12.5 3.2 12.5 4.5 V7.2 Q12.5 8.5 13.5 8.5 H15" fill="none" stroke="#555" stroke-width="1"/></svg>
<svg style="position:absolute;left:948.5px;top:218px" width="17" height="12" viewBox="0 0 17 12"><path d="M1 8.5 V4 Q1 3 2.25 3 Q3.5 3 3.5 4 V8.5 M1 6 H3.5" fill="none" stroke="#555" stroke-width="1"/><rect x="4.8" y="0" width="6.6" height="11" fill="#6fa38b"/><path d="M6.8 8.5 V3 H9 Q10 3 10 4.2 Q10 5.6 8.8 5.6 H6.8 M8.8 5.6 Q10.2 5.6 10.2 7 Q10.2 8.5 9 8.5 H6.8" fill="none" stroke="#fff" stroke-width="1"/><path d="M15 3.2 H13.5 Q12.5 3.2 12.5 4.5 V7.2 Q12.5 8.5 13.5 8.5 H15" fill="none" stroke="#555" stroke-width="1"/></svg>
<svg style="position:absolute;left:1089.5px;top:218px" width="17" height="12" viewBox="0 0 17 12"><path d="M1 8.5 V4 Q1 3 2.25 3 Q3.5 3 3.5 4 V8.5 M1 6 H3.5" fill="none" stroke="#555" stroke-width="1"/><rect x="4.8" y="0" width="6.6" height="11" fill="#6fa38b"/><path d="M6.8 8.5 V3 H9 Q10 3 10 4.2 Q10 5.6 8.8 5.6 H6.8 M8.8 5.6 Q10.2 5.6 10.2 7 Q10.2 8.5 9 8.5 H6.8" fill="none" stroke="#fff" stroke-width="1"/><path d="M15 3.2 H13.5 Q12.5 3.2 12.5 4.5 V7.2 Q12.5 8.5 13.5 8.5 H15" fill="none" stroke="#555" stroke-width="1"/></svg>
<svg style="position:absolute;left:1211.5px;top:218px" width="17" height="12" viewBox="0 0 17 12"><path d="M1 8.5 V4 Q1 3 2.25 3 Q3.5 3 3.5 4 V8.5 M1 6 H3.5" fill="none" stroke="#555" stroke-width="1"/><rect x="4.8" y="0" width="6.6" height="11" fill="#6fa38b"/><path d="M6.8 8.5 V3 H9 Q10 3 10 4.2 Q10 5.6 8.8 5.6 H6.8 M8.8 5.6 Q10.2 5.6 10.2 7 Q10.2 8.5 9 8.5 H6.8" fill="none" stroke="#fff" stroke-width="1"/><path d="M15 3.2 H13.5 Q12.5 3.2 12.5 4.5 V7.2 Q12.5 8.5 13.5 8.5 H15" fill="none" stroke="#555" stroke-width="1"/></svg>
<div style="position:absolute;left:243px;top:233px;width:1030px;height:215px;overflow:hidden">
<div style="position:absolute;left:0;top:18px;width:1030px;height:1px;background:#d8d8d8"></div>
<div style="position:absolute;left:9px;top:2px;width:13px;height:13px;border:1px solid #969696;box-sizing:border-box;background:#fff"></div>
<svg style="position:absolute;left:45px;top:1px" width="18" height="18" viewBox="0 0 18 18"><path d="M2 4 Q2 3 3 3 Q4 3 4 4 L4 7 L16 7 L16 4 Q16 3 17 3 Q18 3 18 4 L18 11 Q18 12 17 12 L3 12 Q2 12 2 11 Z" fill="#808080"/><rect x="5.5" y="0.5" width="9" height="5" fill="#fff" stroke="#808080" stroke-width="1.2"/><rect x="15" y="9" width="1.5" height="1.5" fill="#fff"/><rect x="5.5" y="10.5" width="9" height="5" fill="#fff" stroke="#808080" stroke-width="1.2"/><path d="M7 11.5 H13 M7 13.5 H13" stroke="#3d7bbf" stroke-width="1"/></svg>
<div style="position:absolute;left:82.90px;top:3px;font-size:11px;line-height:normal;white-space:pre;color:#1e1e1e;transform:scaleX(0.9561);transform-origin:0 0">Facture</div>
<div style="position:absolute;left:219.40px;top:3px;font-size:11px;line-height:normal;white-space:pre;color:#1e1e1e;transform:scaleX(0.9736);transform-origin:0 0">A comptabiliser</div>
<div style="position:absolute;left:316.60px;top:3px;font-size:11px;line-height:normal;white-space:pre;color:#1e1e1e;transform:scaleX(0.9723);transform-origin:0 0">FA00306</div>
<div style="position:absolute;left:402.00px;top:3px;font-size:11px;line-height:normal;white-space:pre;color:#1e1e1e;transform:scaleX(0.8855);transform-origin:0 0">TEST PAPYRUS</div>
<div style="position:absolute;left:553.80px;top:3px;font-size:11px;line-height:normal;white-space:pre;color:#1e1e1e;transform:scaleX(1.0222);transform-origin:0 0">22/10/2024</div>
<div style="position:absolute;left:652.98px;top:3px;font-size:11px;line-height:normal;white-space:pre;color:#1e1e1e;transform:scaleX(1.0251);transform-origin:0 0">2 217,36</div>
<div style="position:absolute;left:703.70px;top:3px;font-size:11px;line-height:normal;white-space:pre;color:#1e1e1e;transform:scaleX(0.9386);transform-origin:0 0">PRESTA820003</div>
<div style="position:absolute;left:844.50px;top:3px;font-size:11px;line-height:normal;white-space:pre;color:#1e1e1e;transform:scaleX(0.8796);transform-origin:0 0">FR LALIE CORN</div>
<div style="position:absolute;left:966.50px;top:3px;font-size:11px;line-height:normal;white-space:pre;color:#1e1e1e;transform:scaleX(0.8761);transform-origin:0 0">CORN LALIE</div>
<div style="position:absolute;left:0;top:37px;width:1030px;height:1px;background:#d8d8d8"></div>
<div style="position:absolute;left:9px;top:21px;width:13px;height:13px;border:1px solid #969696;box-sizing:border-box;background:#fff"></div>
<svg style="position:absolute;left:45px;top:20px" width="18" height="18" viewBox="0 0 18 18"><path d="M2 4 Q2 3 3 3 Q4 3 4 4 L4 7 L16 7 L16 4 Q16 3 17 3 Q18 3 18 4 L18 11 Q18 12 17 12 L3 12 Q2 12 2 11 Z" fill="#808080"/><rect x="5.5" y="0.5" width="9" height="5" fill="#fff" stroke="#808080" stroke-width="1.2"/><rect x="15" y="9" width="1.5" height="1.5" fill="#fff"/><rect x="5.5" y="10.5" width="9" height="5" fill="#fff" stroke="#808080" stroke-width="1.2"/><path d="M7 11.5 H13 M7 13.5 H13" stroke="#3d7bbf" stroke-width="1"/></svg>
<div style="position:absolute;left:82.90px;top:22px;font-size:11px;line-height:normal;white-space:pre;color:#1e1e1e;transform:scaleX(0.9561);transform-origin:0 0">Facture</div>
<div style="position:absolute;left:219.40px;top:22px;font-size:11px;line-height:normal;white-space:pre;color:#1e1e1e;transform:scaleX(0.9736);transform-origin:0 0">A comptabiliser</div>
<div style="position:absolute;left:316.60px;top:22px;font-size:11px;line-height:normal;white-space:pre;color:#1e1e1e;transform:scaleX(0.9723);transform-origin:0 0">FA00307</div>
<div style="position:absolute;left:402.00px;top:22px;font-size:11px;line-height:normal;white-space:pre;color:#1e1e1e;transform:scaleX(0.9141);transform-origin:0 0">TEST PAPYRUS 2810</div>
<div style="position:absolute;left:553.80px;top:22px;font-size:11px;line-height:normal;white-space:pre;color:#1e1e1e;transform:scaleX(1.0222);transform-origin:0 0">28/10/2024</div>
<div style="position:absolute;left:652.98px;top:22px;font-size:11px;line-height:normal;white-space:pre;color:#1e1e1e;transform:scaleX(1.0251);transform-origin:0 0">1 283,60</div>
<div style="position:absolute;left:703.70px;top:22px;font-size:11px;line-height:normal;white-space:pre;color:#1e1e1e;transform:scaleX(0.9386);transform-origin:0 0">PRESTA820003</div>
<div style="position:absolute;left:844.50px;top:22px;font-size:11px;line-height:normal;white-space:pre;color:#1e1e1e;transform:scaleX(0.8796);transform-origin:0 0">FR LALIE CORN</div>
<div style="position:absolute;left:966.50px;top:22px;font-size:11px;line-height:normal;white-space:pre;color:#1e1e1e;transform:scaleX(0.8761);transform-origin:0 0">CORN LALIE</div>
<div style="position:absolute;left:0;top:56px;width:1030px;height:1px;background:#d8d8d8"></div>
<div style="position:absolute;left:9px;top:40px;width:13px;height:13px;border:1px solid #969696;box-sizing:border-box;background:#fff"></div>
<svg style="position:absolute;left:45px;top:39px" width="18" height="18" viewBox="0 0 18 18"><path d="M2 4 Q2 3 3 3 Q4 3 4 4 L4 7 L16 7 L16 4 Q16 3 17 3 Q18 3 18 4 L18 11 Q18 12 17 12 L3 12 Q2 12 2 11 Z" fill="#808080"/><rect x="5.5" y="0.5" width="9" height="5" fill="#fff" stroke="#808080" stroke-width="1.2"/><rect x="15" y="9" width="1.5" height="1.5" fill="#fff"/><rect x="5.5" y="10.5" width="9" height="5" fill="#fff" stroke="#808080" stroke-width="1.2"/><path d="M7 11.5 H13 M7 13.5 H13" stroke="#3d7bbf" stroke-width="1"/></svg>
<div style="position:absolute;left:82.90px;top:41px;font-size:11px;line-height:normal;white-space:pre;color:#1e1e1e;transform:scaleX(0.9561);transform-origin:0 0">Facture</div>
<div style="position:absolute;left:219.40px;top:41px;font-size:11px;line-height:normal;white-space:pre;color:#1e1e1e;transform:scaleX(0.9736);transform-origin:0 0">A comptabiliser</div>
<div style="position:absolute;left:316.60px;top:41px;font-size:11px;line-height:normal;white-space:pre;color:#1e1e1e;transform:scaleX(0.9723);transform-origin:0 0">FA00308</div>
<div style="position:absolute;left:402.00px;top:41px;font-size:11px;line-height:normal;white-space:pre;color:#1e1e1e;transform:scaleX(0.9141);transform-origin:0 0">TEST PAPYRUS 2810</div>
<div style="position:absolute;left:553.80px;top:41px;font-size:11px;line-height:normal;white-space:pre;color:#1e1e1e;transform:scaleX(1.0222);transform-origin:0 0">28/10/2024</div>
<div style="position:absolute;left:661.74px;top:41px;font-size:11px;line-height:normal;white-space:pre;color:#1e1e1e;transform:scaleX(1.0182);transform-origin:0 0">896,33</div>
<div style="position:absolute;left:703.70px;top:41px;font-size:11px;line-height:normal;white-space:pre;color:#1e1e1e;transform:scaleX(0.9386);transform-origin:0 0">PRESTA820004</div>
<div style="position:absolute;left:844.50px;top:41px;font-size:11px;line-height:normal;white-space:pre;color:#1e1e1e;transform:scaleX(0.8745);transform-origin:0 0">CROCHE SARAH</div>
<div style="position:absolute;left:966.50px;top:41px;font-size:11px;line-height:normal;white-space:pre;color:#1e1e1e;transform:scaleX(0.8745);transform-origin:0 0">CROCHE SARAH</div>
<div style="position:absolute;left:0;top:75px;width:1030px;height:1px;background:#d8d8d8"></div>
<div style="position:absolute;left:9px;top:59px;width:13px;height:13px;border:1px solid #969696;box-sizing:border-box;background:#fff"></div>
<div style="position:absolute;left:82.90px;top:60px;font-size:11px;line-height:normal;white-space:pre;color:#1e1e1e;transform:scaleX(0.9561);transform-origin:0 0">Facture</div>
<div style="position:absolute;left:219.40px;top:60px;font-size:11px;line-height:normal;white-space:pre;color:#1e1e1e;transform:scaleX(0.9736);transform-origin:0 0">A comptabiliser</div>
<div style="position:absolute;left:316.60px;top:60px;font-size:11px;line-height:normal;white-space:pre;color:#1e1e1e;transform:scaleX(0.9723);transform-origin:0 0">FA00313</div>
<div style="position:absolute;left:402.00px;top:60px;font-size:11px;line-height:normal;white-space:pre;color:#1e1e1e;transform:scaleX(0.9077);transform-origin:0 0">PS8WEB10104GCWSUU</div>
<div style="position:absolute;left:553.80px;top:60px;font-size:11px;line-height:normal;white-space:pre;color:#1e1e1e;transform:scaleX(1.0222);transform-origin:0 0">29/10/2024</div>
<div style="position:absolute;left:667.86px;top:60px;font-size:11px;line-height:normal;white-space:pre;color:#1e1e1e;transform:scaleX(1.0222);transform-origin:0 0">44,00</div>
<div style="position:absolute;left:703.70px;top:60px;font-size:11px;line-height:normal;white-space:pre;color:#1e1e1e;transform:scaleX(0.9386);transform-origin:0 0">PRESTA800003</div>
<div style="position:absolute;left:844.50px;top:60px;font-size:11px;line-height:normal;white-space:pre;color:#1e1e1e;transform:scaleX(0.8796);transform-origin:0 0">FR LALIE CORN</div>
<div style="position:absolute;left:966.50px;top:60px;font-size:11px;line-height:normal;white-space:pre;color:#1e1e1e;transform:scaleX(0.8761);transform-origin:0 0">CORN LALIE</div>
<div style="position:absolute;left:0;top:94px;width:1030px;height:1px;background:#d8d8d8"></div>
<div style="position:absolute;left:9px;top:78px;width:13px;height:13px;border:1px solid #969696;box-sizing:border-box;background:#fff"></div>
<div style="position:absolute;left:82.90px;top:79px;font-size:11px;line-height:normal;white-space:pre;color:#1e1e1e;transform:scaleX(0.9561);transform-origin:0 0">Facture</div>
<div style="position:absolute;left:219.40px;top:79px;font-size:11px;line-height:normal;white-space:pre;color:#1e1e1e;transform:scaleX(0.9736);transform-origin:0 0">A comptabiliser</div>
<div style="position:absolute;left:316.60px;top:79px;font-size:11px;line-height:normal;white-space:pre;color:#1e1e1e;transform:scaleX(0.9723);transform-origin:0 0">FA00314</div>
<div style="position:absolute;left:402.00px;top:79px;font-size:11px;line-height:normal;white-space:pre;color:#1e1e1e;transform:scaleX(0.8903);transform-origin:0 0">TEST REGROUP 1</div>
<div style="position:absolute;left:553.80px;top:79px;font-size:11px;line-height:normal;white-space:pre;color:#1e1e1e;transform:scaleX(1.0222);transform-origin:0 0">30/10/2024</div>
<div style="position:absolute;left:661.74px;top:79px;font-size:11px;line-height:normal;white-space:pre;color:#1e1e1e;transform:scaleX(1.0182);transform-origin:0 0">601,66</div>
<div style="position:absolute;left:703.70px;top:79px;font-size:11px;line-height:normal;white-space:pre;color:#1e1e1e;transform:scaleX(0.9224);transform-origin:0 0">PS8SAGE0010</div>
<div style="position:absolute;left:844.50px;top:79px;font-size:11px;line-height:normal;white-space:pre;color:#1e1e1e;transform:scaleX(0.9055);transform-origin:0 0">LALIE CORN (FR)</div>
<div style="position:absolute;left:966.50px;top:79px;font-size:11px;line-height:normal;white-space:pre;color:#1e1e1e;transform:scaleX(0.9055);transform-origin:0 0">LALIE CORN (FR)</div>
<div style="position:absolute;left:0;top:113px;width:1030px;height:1px;background:#d8d8d8"></div>
<div style="position:absolute;left:9px;top:97px;width:13px;height:13px;border:1px solid #969696;box-sizing:border-box;background:#fff"></div>
<div style="position:absolute;left:82.90px;top:98px;font-size:11px;line-height:normal;white-space:pre;color:#1e1e1e;transform:scaleX(0.9561);transform-origin:0 0">Facture</div>
<div style="position:absolute;left:219.40px;top:98px;font-size:11px;line-height:normal;white-space:pre;color:#1e1e1e;transform:scaleX(0.9736);transform-origin:0 0">A comptabiliser</div>
<div style="position:absolute;left:316.60px;top:98px;font-size:11px;line-height:normal;white-space:pre;color:#1e1e1e;transform:scaleX(0.9723);transform-origin:0 0">FA00317</div>
<div style="position:absolute;left:402.00px;top:98px;font-size:11px;line-height:normal;white-space:pre;color:#1e1e1e;transform:scaleX(0.9374);transform-origin:0 0">PS82WEB80012</div>
<div style="position:absolute;left:553.80px;top:98px;font-size:11px;line-height:normal;white-space:pre;color:#1e1e1e;transform:scaleX(1.0376);transform-origin:0 0">29/11/2024</div>
<div style="position:absolute;left:652.98px;top:98px;font-size:11px;line-height:normal;white-space:pre;color:#1e1e1e;transform:scaleX(1.0251);transform-origin:0 0">2 719,86</div>
<div style="position:absolute;left:703.70px;top:98px;font-size:11px;line-height:normal;white-space:pre;color:#1e1e1e;transform:scaleX(0.9152);transform-origin:0 0">BCSAGE0001</div>
<div style="position:absolute;left:844.50px;top:98px;font-size:11px;line-height:normal;white-space:pre;color:#1e1e1e;transform:scaleX(0.8745);transform-origin:0 0">SARAH CROCHE</div>
<div style="position:absolute;left:0;top:132px;width:1030px;height:1px;background:#d8d8d8"></div>
<div style="position:absolute;left:9px;top:116px;width:13px;height:13px;border:1px solid #969696;box-sizing:border-box;background:#fff"></div>
<svg style="position:absolute;left:45px;top:115px" width="18" height="18" viewBox="0 0 18 18"><path d="M2 4 Q2 3 3 3 Q4 3 4 4 L4 7 L16 7 L16 4 Q16 3 17 3 Q18 3 18 4 L18 11 Q18 12 17 12 L3 12 Q2 12 2 11 Z" fill="#808080"/><rect x="5.5" y="0.5" width="9" height="5" fill="#fff" stroke="#808080" stroke-width="1.2"/><rect x="15" y="9" width="1.5" height="1.5" fill="#fff"/><rect x="5.5" y="10.5" width="9" height="5" fill="#fff" stroke="#808080" stroke-width="1.2"/><path d="M7 11.5 H13 M7 13.5 H13" stroke="#3d7bbf" stroke-width="1"/></svg>
<div style="position:absolute;left:82.90px;top:117px;font-size:11px;line-height:normal;white-space:pre;color:#1e1e1e;transform:scaleX(0.9561);transform-origin:0 0">Facture</div>
<div style="position:absolute;left:219.40px;top:117px;font-size:11px;line-height:normal;white-space:pre;color:#1e1e1e;transform:scaleX(0.9736);transform-origin:0 0">A comptabiliser</div>
<div style="position:absolute;left:316.60px;top:117px;font-size:11px;line-height:normal;white-space:pre;color:#1e1e1e;transform:scaleX(0.9723);transform-origin:0 0">FA00319</div>
<div style="position:absolute;left:402.00px;top:117px;font-size:11px;line-height:normal;white-space:pre;color:#1e1e1e;transform:scaleX(0.9468);transform-origin:0 0">PS82WEB80011</div>
<div style="position:absolute;left:553.80px;top:117px;font-size:11px;line-height:normal;white-space:pre;color:#1e1e1e;transform:scaleX(1.0376);transform-origin:0 0">29/11/2024</div>
<div style="position:absolute;left:652.98px;top:117px;font-size:11px;line-height:normal;white-space:pre;color:#1e1e1e;transform:scaleX(1.0251);transform-origin:0 0">2 719,86</div>
<div style="position:absolute;left:703.70px;top:117px;font-size:11px;line-height:normal;white-space:pre;color:#1e1e1e;transform:scaleX(0.9152);transform-origin:0 0">BCSAGE0001</div>
<div style="position:absolute;left:844.50px;top:117px;font-size:11px;line-height:normal;white-space:pre;color:#1e1e1e;transform:scaleX(0.8745);transform-origin:0 0">SARAH CROCHE</div>
<div style="position:absolute;left:0;top:151px;width:1030px;height:1px;background:#d8d8d8"></div>
<div style="position:absolute;left:9px;top:135px;width:13px;height:13px;border:1px solid #969696;box-sizing:border-box;background:#fff"></div>
<div style="position:absolute;left:82.90px;top:136px;font-size:11px;line-height:normal;white-space:pre;color:#1e1e1e;transform:scaleX(0.9561);transform-origin:0 0">Facture</div>
<div style="position:absolute;left:219.40px;top:136px;font-size:11px;line-height:normal;white-space:pre;color:#1e1e1e;transform:scaleX(0.9736);transform-origin:0 0">A comptabiliser</div>
<div style="position:absolute;left:316.60px;top:136px;font-size:11px;line-height:normal;white-space:pre;color:#1e1e1e;transform:scaleX(0.9591);transform-origin:0 0">FV00019</div>
<div style="position:absolute;left:402.00px;top:136px;font-size:11px;line-height:normal;white-space:pre;color:#1e1e1e;transform:scaleX(0.9468);transform-origin:0 0">PS82WEB80011</div>
<div style="position:absolute;left:553.80px;top:136px;font-size:11px;line-height:normal;white-space:pre;color:#1e1e1e;transform:scaleX(1.0376);transform-origin:0 0">29/11/2024</div>
<div style="position:absolute;left:648.59px;top:136px;font-size:11px;line-height:normal;white-space:pre;color:#1e1e1e;transform:scaleX(1.0391);transform-origin:0 0">-2 719,86</div>
<div style="position:absolute;left:703.70px;top:136px;font-size:11px;line-height:normal;white-space:pre;color:#1e1e1e;transform:scaleX(0.9152);transform-origin:0 0">BCSAGE0001</div>
<div style="position:absolute;left:844.50px;top:136px;font-size:11px;line-height:normal;white-space:pre;color:#1e1e1e;transform:scaleX(0.8745);transform-origin:0 0">SARAH CROCHE</div>
<div style="position:absolute;left:0;top:170px;width:1030px;height:1px;background:#d8d8d8"></div>
<div style="position:absolute;left:9px;top:154px;width:13px;height:13px;border:1px solid #969696;box-sizing:border-box;background:#fff"></div>
<div style="position:absolute;left:82.90px;top:155px;font-size:11px;line-height:normal;white-space:pre;color:#1e1e1e;transform:scaleX(0.9561);transform-origin:0 0">Facture</div>
<div style="position:absolute;left:219.40px;top:155px;font-size:11px;line-height:normal;white-space:pre;color:#1e1e1e;transform:scaleX(0.9736);transform-origin:0 0">A comptabiliser</div>
<div style="position:absolute;left:316.60px;top:155px;font-size:11px;line-height:normal;white-space:pre;color:#1e1e1e;transform:scaleX(0.9723);transform-origin:0 0">FA00320</div>
<div style="position:absolute;left:402.00px;top:155px;font-size:11px;line-height:normal;white-space:pre;color:#1e1e1e;transform:scaleX(0.9374);transform-origin:0 0">PS82WEB80010</div>
<div style="position:absolute;left:553.80px;top:155px;font-size:11px;line-height:normal;white-space:pre;color:#1e1e1e;transform:scaleX(1.0376);transform-origin:0 0">29/11/2024</div>
<div style="position:absolute;left:652.98px;top:155px;font-size:11px;line-height:normal;white-space:pre;color:#1e1e1e;transform:scaleX(1.0251);transform-origin:0 0">2 719,86</div>
<div style="position:absolute;left:703.70px;top:155px;font-size:11px;line-height:normal;white-space:pre;color:#1e1e1e;transform:scaleX(0.9152);transform-origin:0 0">BCSAGE0001</div>
<div style="position:absolute;left:844.50px;top:155px;font-size:11px;line-height:normal;white-space:pre;color:#1e1e1e;transform:scaleX(0.8745);transform-origin:0 0">SARAH CROCHE</div>
<div style="position:absolute;left:0;top:189px;width:1030px;height:1px;background:#d8d8d8"></div>
<div style="position:absolute;left:9px;top:173px;width:13px;height:13px;border:1px solid #969696;box-sizing:border-box;background:#fff"></div>
<div style="position:absolute;left:82.90px;top:174px;font-size:11px;line-height:normal;white-space:pre;color:#1e1e1e;transform:scaleX(0.9561);transform-origin:0 0">Facture</div>
<div style="position:absolute;left:219.40px;top:174px;font-size:11px;line-height:normal;white-space:pre;color:#1e1e1e;transform:scaleX(0.9736);transform-origin:0 0">A comptabiliser</div>
<div style="position:absolute;left:316.60px;top:174px;font-size:11px;line-height:normal;white-space:pre;color:#1e1e1e;transform:scaleX(0.9723);transform-origin:0 0">FA00322</div>
<div style="position:absolute;left:402.00px;top:174px;font-size:11px;line-height:normal;white-space:pre;color:#1e1e1e;transform:scaleX(0.9324);transform-origin:0 0">PS8WEB10095</div>
<div style="position:absolute;left:553.80px;top:174px;font-size:11px;line-height:normal;white-space:pre;color:#1e1e1e;transform:scaleX(1.0222);transform-origin:0 0">20/01/2025</div>
<div style="position:absolute;left:661.74px;top:174px;font-size:11px;line-height:normal;white-space:pre;color:#1e1e1e;transform:scaleX(1.0182);transform-origin:0 0">280,07</div>
<div style="position:absolute;left:703.70px;top:174px;font-size:11px;line-height:normal;white-space:pre;color:#1e1e1e;transform:scaleX(0.9386);transform-origin:0 0">PRESTA800003</div>
<div style="position:absolute;left:844.50px;top:174px;font-size:11px;line-height:normal;white-space:pre;color:#1e1e1e;transform:scaleX(0.8796);transform-origin:0 0">FR LALIE CORN</div>
<div style="position:absolute;left:966.50px;top:174px;font-size:11px;line-height:normal;white-space:pre;color:#1e1e1e;transform:scaleX(0.8761);transform-origin:0 0">CORN LALIE</div>
<div style="position:absolute;left:0;top:208px;width:1030px;height:1px;background:#d8d8d8"></div>
<div style="position:absolute;left:9px;top:192px;width:13px;height:13px;border:1px solid #969696;box-sizing:border-box;background:#fff"></div>
<div style="position:absolute;left:82.90px;top:193px;font-size:11px;line-height:normal;white-space:pre;color:#1e1e1e;transform:scaleX(0.9561);transform-origin:0 0">Facture</div>
<div style="position:absolute;left:219.40px;top:193px;font-size:11px;line-height:normal;white-space:pre;color:#1e1e1e;transform:scaleX(0.9736);transform-origin:0 0">A comptabiliser</div>
<div style="position:absolute;left:316.60px;top:193px;font-size:11px;line-height:normal;white-space:pre;color:#1e1e1e;transform:scaleX(0.9723);transform-origin:0 0">FA00323</div>
<div style="position:absolute;left:402.00px;top:193px;font-size:11px;line-height:normal;white-space:pre;color:#1e1e1e;transform:scaleX(0.9324);transform-origin:0 0">PS8WEB10097</div>
<div style="position:absolute;left:553.80px;top:193px;font-size:11px;line-height:normal;white-space:pre;color:#1e1e1e;transform:scaleX(1.0222);transform-origin:0 0">20/01/2025</div>
<div style="position:absolute;left:661.74px;top:193px;font-size:11px;line-height:normal;white-space:pre;color:#1e1e1e;transform:scaleX(1.0182);transform-origin:0 0">359,59</div>
<div style="position:absolute;left:703.70px;top:193px;font-size:11px;line-height:normal;white-space:pre;color:#1e1e1e;transform:scaleX(0.9386);transform-origin:0 0">PRESTA800003</div>
<div style="position:absolute;left:844.50px;top:193px;font-size:11px;line-height:normal;white-space:pre;color:#1e1e1e;transform:scaleX(0.8796);transform-origin:0 0">FR LALIE CORN</div>
<div style="position:absolute;left:966.50px;top:193px;font-size:11px;line-height:normal;white-space:pre;color:#1e1e1e;transform:scaleX(0.8761);transform-origin:0 0">CORN LALIE</div>
<div style="position:absolute;left:9px;top:211px;width:13px;height:13px;border:1px solid #969696;box-sizing:border-box;background:#fff"></div>
<div style="position:absolute;left:82.90px;top:212px;font-size:11px;line-height:normal;white-space:pre;color:#1e1e1e;transform:scaleX(0.9561);transform-origin:0 0">Facture</div>
<div style="position:absolute;left:219.40px;top:212px;font-size:11px;line-height:normal;white-space:pre;color:#1e1e1e;transform:scaleX(0.9736);transform-origin:0 0">A comptabiliser</div>
<div style="position:absolute;left:316.60px;top:212px;font-size:11px;line-height:normal;white-space:pre;color:#1e1e1e;transform:scaleX(0.9723);transform-origin:0 0">FA00324</div>
<div style="position:absolute;left:402.00px;top:212px;font-size:11px;line-height:normal;white-space:pre;color:#1e1e1e;transform:scaleX(0.9324);transform-origin:0 0">PS8WEB10099</div>
<div style="position:absolute;left:553.80px;top:212px;font-size:11px;line-height:normal;white-space:pre;color:#1e1e1e;transform:scaleX(1.0222);transform-origin:0 0">20/01/2025</div>
<div style="position:absolute;left:661.74px;top:212px;font-size:11px;line-height:normal;white-space:pre;color:#1e1e1e;transform:scaleX(1.0182);transform-origin:0 0">320,07</div>
<div style="position:absolute;left:703.70px;top:212px;font-size:11px;line-height:normal;white-space:pre;color:#1e1e1e;transform:scaleX(0.9386);transform-origin:0 0">PRESTA800003</div>
<div style="position:absolute;left:844.50px;top:212px;font-size:11px;line-height:normal;white-space:pre;color:#1e1e1e;transform:scaleX(0.8796);transform-origin:0 0">FR LALIE CORN</div>
<div style="position:absolute;left:966.50px;top:212px;font-size:11px;line-height:normal;white-space:pre;color:#1e1e1e;transform:scaleX(0.8761);transform-origin:0 0">CORN LALIE</div>
</div>
<div style="position:absolute;left:1273px;top:214px;width:17px;height:234px;background:#f0f0f0"></div>
<svg style="position:absolute;left:1273px;top:214px" width="17" height="17" viewBox="0 0 17 17"><path d="M4.5 10.5 L8.5 6.5 L12.5 10.5" fill="none" stroke="#606060" stroke-width="1.5"/></svg>
<div style="position:absolute;left:1273px;top:231px;width:17px;height:28px;background:#c8c8c8"></div>
<svg style="position:absolute;left:1273px;top:431px" width="17" height="17" viewBox="0 0 17 17"><path d="M4.5 6.5 L8.5 10.5 L12.5 6.5" fill="none" stroke="#606060" stroke-width="1.5"/></svg>
<div style="position:absolute;left:243px;top:448px;width:1047px;height:1px;background:#a0a0a0"></div>
<div style="position:absolute;left:243px;top:449px;width:1047px;height:30px;background:#f0f0f0"></div>
<div style="position:absolute;left:869px;top:452px;width:73px;height:24px;background:#fff;border:1px solid #a8a8a8;box-sizing:border-box"></div>
<div style="position:absolute;left:883.50px;top:458px;font-size:11px;line-height:normal;white-space:pre;color:#1e1e1e;transform:scaleX(0.9963);transform-origin:0 0;">331 107,91</div>
<div style="position:absolute;left:243px;top:479px;width:1047px;height:17px;background:#f0f0f0"></div>
<div style="position:absolute;left:243px;top:479px;width:17px;height:17px;background:#e8e8e8"></div>
<div style="position:absolute;left:260px;top:479px;width:790px;height:17px;background:#c8c8c8"></div>
<svg style="position:absolute;left:243px;top:479px" width="17" height="17" viewBox="0 0 17 17"><path d="M11 5 L7.5 8.5 L11 12" fill="none" stroke="#606060" stroke-width="2"/></svg>
<svg style="position:absolute;left:1273px;top:479px" width="17" height="17" viewBox="0 0 17 17"><path d="M6.5 5 L10 8.5 L6.5 12" fill="none" stroke="#606060" stroke-width="2"/></svg>
<svg style="position:absolute;left:1217px;top:165px" width="14" height="22" viewBox="0 0 14 22"><path d="M1.5 1.5 L1.5 17 L5 13.5 L7.5 19.5 L10 18.5 L7.5 12.5 L12.5 12.5 Z" fill="#fff" stroke="#000" stroke-width="1"/></svg>
<div style="position:absolute;left:1px;top:505px;width:1298px;height:46px;background:#e3e3e3"></div>
<div style="position:absolute;left:1px;top:551px;width:1298px;height:1px;background:#c6c6c6"></div>
<div style="position:absolute;left:9px;top:513px;width:95px;height:35px;border:3px solid #ff0000;box-sizing:border-box"></div>
<div style="position:absolute;left:21.60px;top:516px;font-size:24px;line-height:normal;white-space:pre;color:#1f74cc;transform:scaleX(0.9891);transform-origin:0 0;-webkit-text-stroke:0.65px #e3e3e3;">Ventes</div>
<div style="position:absolute;left:117.00px;top:516px;font-size:24px;line-height:normal;white-space:pre;color:#1e1e26;transform:scaleX(0.9690);transform-origin:0 0;-webkit-text-stroke:0.65px #e3e3e3;">Achats</div>
<div style="position:absolute;left:211.00px;top:516px;font-size:24px;line-height:normal;white-space:pre;color:#1e1e26;transform:scaleX(0.9761);transform-origin:0 0;-webkit-text-stroke:0.65px #e3e3e3;">Articles</div>
<div style="position:absolute;left:310.00px;top:516px;font-size:24px;line-height:normal;white-space:pre;color:#1e1e26;transform:scaleX(0.9542);transform-origin:0 0;-webkit-text-stroke:0.65px #e3e3e3;">Clients</div>
<div style="position:absolute;left:403.00px;top:516px;font-size:24px;line-height:normal;white-space:pre;color:#1e1e26;transform:scaleX(0.9660);transform-origin:0 0;-webkit-text-stroke:0.65px #e3e3e3;">Fournisseurs</div>
<div style="position:absolute;left:6.50px;top:556px;font-size:11px;line-height:normal;white-space:pre;color:#2a2a3a;transform:scaleX(0.9674);transform-origin:0 0;">80 Document(s)</div>
<div style="position:absolute;left:1102.50px;top:556px;font-size:11px;line-height:normal;white-space:pre;color:#2a2a3a;transform:scaleX(0.9889);transform-origin:0 0;">Wise Up Papyrus version 25.7.22.0</div>
<div style="position:absolute;left:1295px;top:563px;width:2px;height:2px;background:#666"></div>
<div style="position:absolute;left:1292px;top:566px;width:2px;height:2px;background:#666"></div>
<div style="position:absolute;left:1295px;top:566px;width:2px;height:2px;background:#666"></div>
<div style="position:absolute;left:1289px;top:569px;width:2px;height:2px;background:#666"></div>
<div style="position:absolute;left:1292px;top:569px;width:2px;height:2px;background:#666"></div>
<div style="position:absolute;left:1295px;top:569px;width:2px;height:2px;background:#666"></div>
<div style="position:absolute;left:134px;top:36px;width:138px;height:26px;border:3px solid #ff0000;box-sizing:border-box"></div>
</body></html>
